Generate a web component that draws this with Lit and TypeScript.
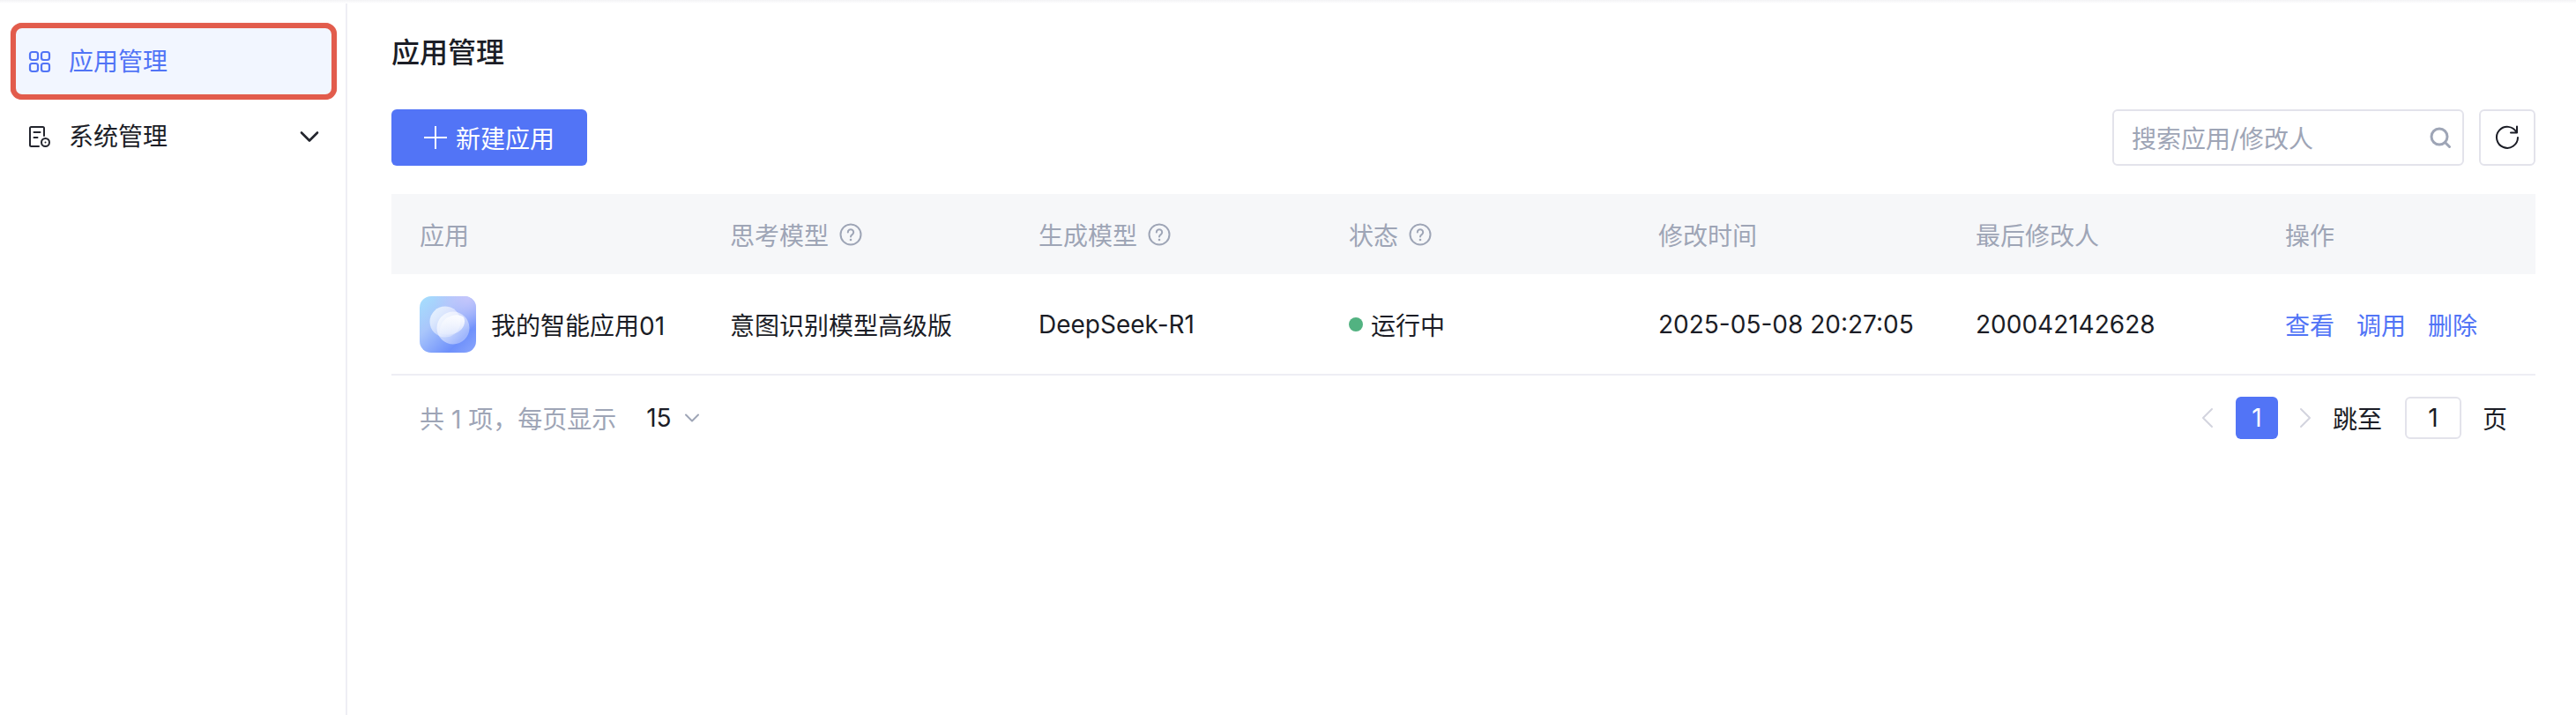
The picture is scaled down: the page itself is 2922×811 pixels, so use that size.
import { LitElement, html, css, svg } from "lit";
import { customElement } from "lit/decorators.js";

const help = html`<svg class="help" viewBox="0 0 26 26" fill="none"><circle cx="13" cy="13" r="11.5" stroke="#9ea5b6" stroke-width="2"/><path d="M9.8 10.4a3.2 3.2 0 1 1 4.9 2.7c-1 .6-1.7 1.2-1.7 2.4" stroke="#9ea5b6" stroke-width="2" stroke-linecap="round"/><circle cx="13" cy="19" r="1.3" fill="#9ea5b6"/></svg>`;

const logo = svg`<defs>
<linearGradient id="lg" x1="0" y1="0" x2="1" y2="1"><stop offset="0" stop-color="#a5e0fd"/><stop offset=".35" stop-color="#a9c6fb"/><stop offset=".75" stop-color="#6e90fb"/><stop offset="1" stop-color="#8aa6fc"/></linearGradient>
<radialGradient id="lg2" cx=".85" cy="0" r="0.6"><stop offset="0" stop-color="#c6c6fb"/><stop offset="1" stop-color="#c6c6fb" stop-opacity="0"/></radialGradient>
<linearGradient id="a" x1="0" y1="0" x2="1" y2="1"><stop offset="0" stop-color="#fff" stop-opacity=".75"/><stop offset="1" stop-color="#fff" stop-opacity=".25"/></linearGradient>
<linearGradient id="b" x1="1" y1="0" x2="0" y2="1"><stop offset="0" stop-color="#fff" stop-opacity=".95"/><stop offset="1" stop-color="#fff" stop-opacity=".1"/></linearGradient></defs>
<rect width="64" height="64" rx="13" fill="url(#lg)"/><rect width="64" height="64" rx="13" fill="url(#lg2)"/>
<circle cx="29" cy="29" r="17.5" fill="url(#a)"/><circle cx="38" cy="36" r="18.5" fill="url(#a)"/>
<path d="M23 42c-1-9 4-17 14-20 5-1.500 10-.5 13 2 2 4 1 10-3 14-6 6-16 7-24 4z" fill="url(#b)"/>`;

@customElement("app-root")
export class AppRoot extends LitElement {
  static styles = css`
    :host { display: block; font-family: Inter, "Noto Sans CJK SC", sans-serif; color: #1b1d26; font-size: 28px; height: 811px; background: #fff; overflow: hidden; }
    * { box-sizing: border-box; }
    .topbar { height: 4px; background: linear-gradient(#f3f3f5, #fff); }
    .layout { display: flex; height: 807px; }
    .side { width: 394px; border-right: 2px solid #eeeef4; padding: 22px 10px 0 12px; flex: none; }
    .item { display: flex; align-items: center; font-size: 28px; line-height: 40px; }
    .active { height: 87px; border: 6px solid #e25c4c; border-radius: 13px; background: #f2f6ff; color: #5174f6; padding-left: 14px; width: 370px; box-shadow: 0 0 1px #e25c4c; }
    .plain { height: 84px; padding: 0 20px 0 20px; width: 370px; }
    .item svg.ic { width: 26px; height: 26px; margin-right: 20px; flex: none; }
    .grow { flex: 1; }
    .main { flex: 1; padding: 0 46px 0 50px; min-width: 0; }
    h1 { margin: 0; font-size: 32px; line-height: 48px; font-weight: 500; padding-top: 32px; height: 120px; }
    .tools { display: flex; align-items: center; height: 64px; gap: 17px; margin-bottom: 32px; }
    .btn { width: 222px; height: 64px; background: #5274f6; color: #fff; border-radius: 6px; display: flex; align-items: center; justify-content: center; gap: 10px; font-size: 28px; }
    .search { width: 399px; height: 64px; border: 2px solid #e3e3eb; border-radius: 6px; display: flex; align-items: center; justify-content: space-between; padding: 0 12px 0 20px; color: #9ea5b6; }
    .refresh { width: 64px; height: 64px; border: 2px solid #e3e3eb; border-radius: 6px; display: flex; align-items: center; justify-content: center; }
    .row { display: grid; grid-template-columns: 352px 350px 352px 351px 360px 351px 316px; align-items: center; }
    .row > div { padding-left: 32px; display: flex; align-items: center; white-space: nowrap; }
    .head { height: 91px; background: #f6f7f9; color: #9ea5b6; }
    .help { width: 26px; height: 26px; margin-left: 12px; }
    .body { height: 115px; border-bottom: 2px solid #eeeef4; }
    .logo { width: 64px; height: 64px; margin-right: 17px; flex: none; }
    .dot { width: 16px; height: 16px; border-radius: 50%; background: #52b281; margin-right: 9px; }
    .acts { gap: 25px; color: #5174f6; }
    .foot { display: flex; align-items: center; height: 48px; margin-top: 24px; padding: 0 32px; color: #9ea5b6; }
    .size { color: #1b1d26; margin-left: 34px; }
    .foot .chev { margin-left: 14px; }
    .pager { margin-left: auto; display: flex; align-items: center; color: #1b1d26; }
    .cur { width: 48px; height: 48px; background: #5274f6; color: #fff; border-radius: 6px; display: flex; align-items: center; justify-content: center; margin: 0 24px 0 25px; }
    .jump { margin: 0 26px 0 24px; }
    .input { width: 64px; height: 48px; border: 2px solid #e3e3eb; border-radius: 6px; display: flex; align-items: center; justify-content: center; margin-right: 24px; }
  `;

  render() {
    return html`
      <div class="topbar"></div>
      <div class="layout">
        <aside class="side">
          <div class="item active">
            <svg class="ic" viewBox="0 0 26 26" fill="none" stroke="#5174f6" stroke-width="2.2"><rect x="2" y="2" width="9" height="9" rx="2.5"/><rect x="15" y="2" width="9" height="9" rx="2.5"/><rect x="2" y="15" width="9" height="9" rx="2.5"/><rect x="15" y="15" width="9" height="9" rx="2.5"/></svg>
            应用管理
          </div>
          <div class="item plain">
            <svg class="ic" viewBox="0 0 26 26" fill="none" stroke="#23252e" stroke-width="2" stroke-linecap="round"><path d="M12 24H3.500A1.500 1.500 0 0 1 2 22.500V3.500A1.500 1.500 0 0 1 3.500 2h13A1.500 1.500 0 0 1 18 3.500V12"/><path d="M6.500 8h7M6.500 14h4"/><circle cx="19.500" cy="19.500" r="4.500"/><circle cx="19.500" cy="19.500" r="1" fill="#23252e" stroke="none"/></svg>
            系统管理
            <span class="grow"></span>
            <svg width="22" height="14" viewBox="0 0 22 14" fill="none" stroke="#23252e" stroke-width="2.6" stroke-linecap="round" stroke-linejoin="round"><path d="M2 2.500l9 9 9-9"/></svg>
          </div>
        </aside>
        <main class="main">
          <h1>应用管理</h1>
          <div class="tools">
            <div class="btn">
              <svg width="26" height="26" viewBox="0 0 26 26" stroke="#fff" stroke-width="2"><path d="M13 0v26M0 13h26"/></svg>
              新建应用
            </div>
            <span class="grow"></span>
            <div class="search">搜索应用/修改人
              <svg width="26" height="26" viewBox="0 0 26 26" fill="none" stroke="#9ea5b6" stroke-width="3" stroke-linecap="round"><circle cx="12" cy="12" r="9"/><path d="M19 19l4.500 4.500"/></svg>
            </div>
            <div class="refresh">
              <svg width="30" height="30" viewBox="0 0 30 30" fill="none" stroke="#1b1d26" stroke-width="2" stroke-linecap="round" stroke-linejoin="round"><path d="M25.500 9A12 12 0 1 0 27 15"/><path d="M26 2.500V9.500H19"/></svg>
            </div>
          </div>
          <div class="row head">
            <div>应用</div>
            <div>思考模型${help}</div>
            <div>生成模型${help}</div>
            <div>状态${help}</div>
            <div>修改时间</div>
            <div>最后修改人</div>
            <div>操作</div>
          </div>
          <div class="row body">
            <div><svg class="logo" viewBox="0 0 64 64">${logo}</svg>我的智能应用01</div>
            <div>意图识别模型高级版</div>
            <div>DeepSeek-R1</div>
            <div><span class="dot"></span>运行中</div>
            <div>2025-05-08 20:27:05</div>
            <div>200042142628</div>
            <div class="acts"><span>查看</span><span>调用</span><span>删除</span></div>
          </div>
          <div class="foot">
            共 1 项，每页显示
            <span class="size">15</span>
            <svg class="chev" width="18" height="10" viewBox="0 0 18 10" fill="none" stroke="#9ea5b6" stroke-width="2" stroke-linecap="round" stroke-linejoin="round"><path d="M2 1.500l7 7 7-7"/></svg>
            <div class="pager">
              <svg width="14" height="24" viewBox="0 0 14 24" fill="none" stroke="#d3d4de" stroke-width="2" stroke-linecap="round" stroke-linejoin="round"><path d="M12 2L2 12l10 10"/></svg>
              <div class="cur">1</div>
              <svg width="14" height="24" viewBox="0 0 14 24" fill="none" stroke="#d3d4de" stroke-width="2" stroke-linecap="round" stroke-linejoin="round"><path d="M2 2l10 10L2 22"/></svg>
              <span class="jump">跳至</span>
              <div class="input">1</div>
              <span>页</span>
            </div>
          </div>
        </main>
      </div>
    `;
  }
}
